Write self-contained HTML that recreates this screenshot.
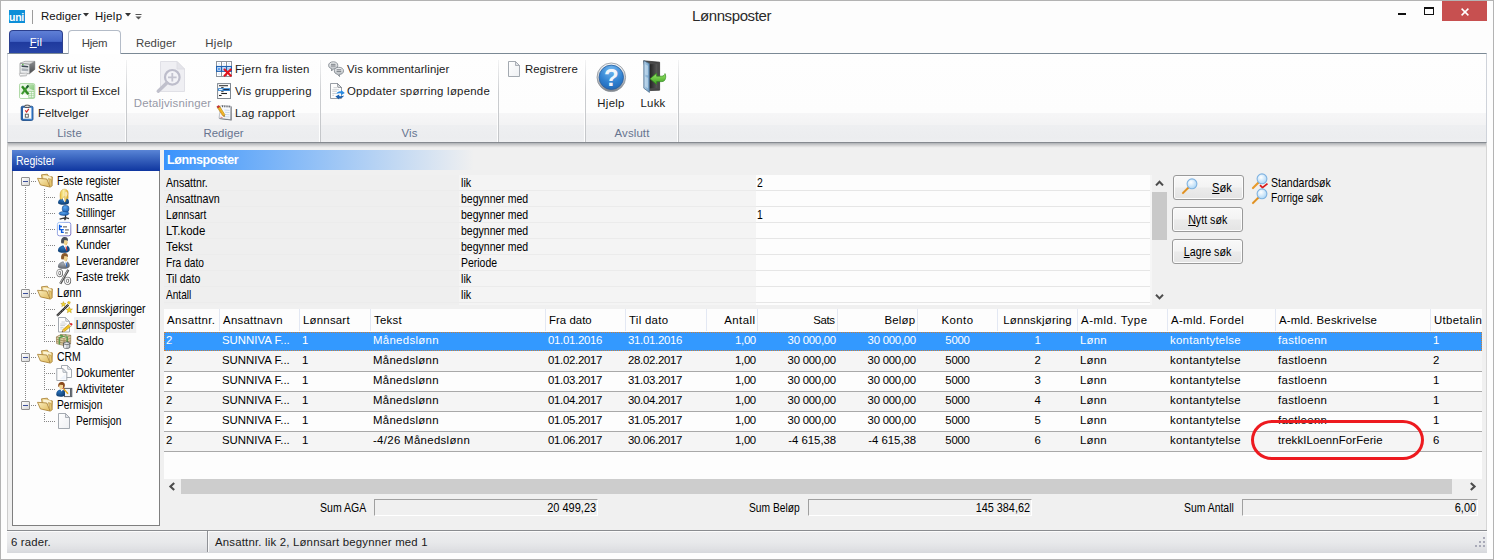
<!DOCTYPE html><html lang="no"><head><meta charset="utf-8"><title>Lønnsposter</title><style>
*{box-sizing:border-box;margin:0;padding:0}
html,body{width:1494px;height:560px;overflow:hidden;background:#fff}
body{position:relative;font-family:"Liberation Sans",Arial,sans-serif;font-size:12px;color:#000}
.a{position:absolute;white-space:nowrap}
.s,.num{font-size:11.4px}
.m{font-size:12.4px;transform-origin:0 50%}
.ib{display:inline-block}
#frame{left:0;top:0;width:1494px;height:560px;border:1px solid #b3b3b3;background:#fdfdfd}
#title{left:0;width:1463px;top:6px;text-align:center;font-size:15px;letter-spacing:-0.4px;color:#2a2a2a;line-height:20px}
.qat{top:8px;line-height:16px;color:#111}
.tab{top:35px;line-height:16px;color:#444;text-align:center}
#fil{left:9px;top:30px;width:54px;height:24px;border-radius:4px 4px 0 0;border:1px solid #2b3f8e;border-bottom:none;
  background:linear-gradient(#5f7fd6 0,#4565c6 45%,#1f3a9e 50%,#2a46a8 100%);color:#fff;text-align:center;line-height:23px}
#hjem{left:68px;top:30px;width:53px;height:24px;border-radius:4px 4px 0 0;border:1px solid #b4bcc8;border-bottom:none;background:#fff;z-index:3}
#ribbon{left:7px;top:53px;width:1480px;height:90px;border:1px solid #cfd3da;border-top:1px solid #7b8995;border-bottom:1px solid #868a90;
  background:linear-gradient(#fefefe 0,#fdfdfd 58.5px,#f6f6f7 59px,#f3f3f4 70.5px,#eeeff1 71.5px,#ecedef 84px,#eff0f2 88px);box-shadow:none}
.gsep{top:60px;width:1px;height:82px;background:linear-gradient(rgba(200,202,206,0.2),#cbcdd0 40%,#c4c6c9)}
.gsep2{top:60px;width:1px;height:82px;background:rgba(255,255,255,0.9)}
.glabel{top:125px;line-height:16px;color:#67748f;text-align:center}
.rb{line-height:16px;color:#1a1a1a}
#body{left:8px;top:143px;width:1478px;height:388px;background:#f0f0f0}
#reghead{left:12px;top:150px;width:148px;height:21px;background:linear-gradient(#5a85d6 0,#4571c8 25%,#2c55b4 60%,#0f36a0 100%);color:#fff;line-height:23px;padding-left:4px}
#tree{left:12px;top:171px;width:148px;height:355px;background:#fdfdfd;border:1px solid #7f7f7f;border-top:none}
.tl{line-height:16px;color:#000}
.dotv{width:1px;background-image:linear-gradient(#868686 50%,transparent 50%);background-size:1px 2px}
.doth{height:1px;background-image:linear-gradient(90deg,#868686 50%,transparent 50%);background-size:2px 1px}
.exp{width:9px;height:9px;border:1px solid #919191;background:linear-gradient(135deg,#fff,#d8d8d8);border-radius:1px}
.exp:after{content:"";position:absolute;left:1px;top:3px;width:5px;height:1px;background:#3a4e9a}
#lphead{left:164px;top:150px;width:310px;height:20px;background:linear-gradient(90deg,#3993fc 0,#f0f0f0 100%);color:#fff;font-weight:bold;font-size:12.5px;line-height:20px;padding-left:3px;letter-spacing:-0.4px}
.sf{line-height:16px}
.btn{height:25px;border:1px solid #999;border-radius:3px;background:linear-gradient(#f9f9f9 0,#f3f3f3 48%,#ebebeb 52%,#e4e4e4 100%);box-shadow:inset 0 0 0 1px #fcfcfc;text-align:center;line-height:25px}
.gh{top:309px;height:23px;line-height:22px;color:#000}
.gc{line-height:19px;height:19px}
.sum{top:499px;height:17px;border:1px solid;border-color:#a0a0a0 #fff #fff #a0a0a0;background:#f0f0f0;text-align:right;line-height:17px;padding-right:1px}
#status{left:7px;top:530px;width:1480px;height:23px;border-top:1px solid #8a8c90;background:linear-gradient(#fbfbfb 0,#fbfbfb 1px,#ededef 1px,#e8e9eb 50%,#e0e1e4 80%,#d6d8dc 100%);}
</style></head><body>
<div id="frame" class="a"></div>
<div id="title" class="a">Lønnsposter</div>
<div class="a" style="left:1398px;top:13px;width:8px;height:2px;background:#111"></div>
<div class="a" style="left:1424px;top:7px;width:10px;height:8px;border:1px solid #111;border-top-width:2px"></div>
<div class="a" style="left:1442px;top:1px;width:45px;height:20px;background:#c75050"></div>
<svg class="a" style="left:1461px;top:8px" width="8" height="8" viewBox="0 0 8 8"><path d="M0.6 0.6 L7.4 7.4 M7.4 0.6 L0.6 7.4" stroke="#fff" stroke-width="1.5" fill="none"/></svg>
<div class="a" style="left:9px;top:10px;width:16px;height:13px;background:#0d8fd8;color:#fff;font-weight:bold;font-size:10.5px;line-height:14px;text-align:center;letter-spacing:-0.3px;text-indent:-1px">uni</div>
<div class="a" style="left:32px;top:10px;width:1px;height:14px;background:#9c9c9c"></div>
<div class="a qat s" style="left:41px;letter-spacing:0.05px">Rediger</div>
<svg class="a" style="left:83px;top:13px" width="6" height="4"><path d="M0 0H6L3 3.5Z" fill="#333"/></svg>
<div class="a qat s" style="left:95px;letter-spacing:0.26px">Hjelp</div>
<svg class="a" style="left:125px;top:13px" width="6" height="4"><path d="M0 0H6L3 3.5Z" fill="#333"/></svg>
<svg class="a" style="left:135px;top:14px" width="7" height="6"><path d="M0.5 0.5H6.5" stroke="#555" stroke-width="1"/><path d="M0.5 2.5H6.5L3.5 5.5Z" fill="#555"/></svg>
<div id="fil" class="a s" style="letter-spacing:0.2px"><span style="text-decoration:underline">F</span>il</div>
<div id="hjem" class="a"></div>
<div class="a tab s" style="left:68px;width:53px;z-index:4;letter-spacing:-0.33px">Hjem</div>
<div class="a tab s" style="left:126px;width:60px;letter-spacing:0.05px">Rediger</div>
<div class="a tab s" style="left:194px;width:50px;letter-spacing:0.26px">Hjelp</div>
<div id="ribbon" class="a"></div>
<div class="a gsep" style="left:126px"></div><div class="a gsep2" style="left:125px"></div>
<div class="a gsep" style="left:320px"></div><div class="a gsep2" style="left:319px"></div>
<div class="a gsep" style="left:498px"></div><div class="a gsep2" style="left:497px"></div>
<div class="a gsep" style="left:585px"></div><div class="a gsep2" style="left:584px"></div>
<div class="a gsep" style="left:678px"></div><div class="a gsep2" style="left:677px"></div>
<div class="a glabel s" style="left:12px;width:115px;letter-spacing:0.13px">Liste</div>
<div class="a glabel s" style="left:127px;width:193px;letter-spacing:0.05px">Rediger</div>
<div class="a glabel s" style="left:321px;width:177px;letter-spacing:0.14px">Vis</div>
<div class="a glabel s" style="left:586px;width:92px;letter-spacing:0.13px">Avslutt</div>
<!--ICONS_SMALL-->
<div class="a" style="left:19px;top:61px;width:16px;height:16px"><svg width="16" height="16" viewBox="0 0 16 16" style="display:block;overflow:visible">
<defs><linearGradient id="pr1" x1="0" y1="0" x2="1" y2="1"><stop offset="0" stop-color="#fafafa"/><stop offset="1" stop-color="#c4c6c8"/></linearGradient>
<linearGradient id="pr2" x1="0" y1="0" x2="0" y2="1"><stop offset="0" stop-color="#8a8c8e"/><stop offset="1" stop-color="#4a4c4e"/></linearGradient></defs>
<path d="M10.4 3.4 L15.8 0.4 V8.4 L10.4 12.8 Z" fill="url(#pr2)" stroke="#555" stroke-width="0.5"/>
<path d="M1 2.3 L6 0.3 L15.8 0.3 L10.4 3.4 Z" fill="url(#pr1)" stroke="#8a8a8a" stroke-width="0.6"/>
<path d="M1 2.3 L10.4 3.4 V12.8 L1 12.2 Z" fill="#eceeef" stroke="#8a8c8e" stroke-width="0.7"/>
<path d="M2.6 4.3 L9.2 5 V6.6 L2.6 6 Z" fill="#3f4a55"/>
<path d="M2.6 7.2 L9.2 7.8 V10.2 L2.6 9.8 Z" fill="#a9afb6"/>
<rect x="3" y="3.1" width="1.6" height="0.9" fill="#4ab838"/>
<path d="M0.3 12.6 L8.2 12.1 L7.4 14.8 L1.2 15.3 Z" fill="#ffffff" stroke="#9a9c9e" stroke-width="0.6"/>
<path d="M1.5 14.4 L7.2 14" stroke="#b5b7b9" stroke-width="0.8"/>
</svg></div>
<div class="a rb s" style="left:38px;top:61px;letter-spacing:0.10px">Skriv ut liste</div>
<div class="a" style="left:19px;top:83px;width:16px;height:16px"><svg width="16" height="16" viewBox="0 0 16 16" style="display:block;overflow:visible">
<defs><linearGradient id="ex1" x1="0" y1="0" x2="1" y2="1"><stop offset="0" stop-color="#f1f9ee"/><stop offset="1" stop-color="#cfe9c8"/></linearGradient>
<linearGradient id="ex2" x1="0" y1="0" x2="1" y2="1"><stop offset="0" stop-color="#bfe3b6"/><stop offset="1" stop-color="#86c97a"/></linearGradient></defs>
<rect x="0.5" y="0.5" width="15.3" height="15" rx="1.6" fill="url(#ex1)" stroke="#a9d6a0" stroke-width="0.9"/>
<path d="M8.5 1.2 H14 Q15.2 1.2 15.2 2.4 V7.5 Q11.5 7 8.5 4 Z" fill="url(#ex2)"/>
<path d="M1 11.5 Q6 10 10 12.5 V15 H2 Q1 15 1 14 Z" fill="#ffffff" opacity="0.85"/>
<rect x="9.8" y="8.6" width="5.2" height="6.2" fill="#f6fbf4" stroke="#8cc982" stroke-width="0.6"/>
<path d="M9.8 10.7 H15 M9.8 12.7 H15 M12.4 8.6 V14.8" stroke="#8cc982" stroke-width="0.6"/>
<path d="M3 3.2 L9.3 11.2" stroke="#2f8a22" stroke-width="2.4"/>
<path d="M9.2 2.6 L2.8 11.2" stroke="#3f9a30" stroke-width="2"/>
<path d="M9.4 2.4 L7.6 4.8" stroke="#1f4f3a" stroke-width="1.6"/>
</svg></div>
<div class="a rb s" style="left:38px;top:83px;letter-spacing:0.04px">Eksport til Excel</div>
<div class="a" style="left:19px;top:105px;width:16px;height:16px"><svg width="16" height="16" viewBox="0 0 16 16" style="display:block;overflow:visible">
<defs><linearGradient id="cl1" x1="0" y1="0" x2="1" y2="0"><stop offset="0" stop-color="#1f5aa8"/><stop offset="1" stop-color="#3b84d6"/></linearGradient></defs>
<rect x="2.2" y="1.2" width="11.8" height="14.3" rx="1.4" fill="url(#cl1)" stroke="#174784" stroke-width="0.8"/>
<rect x="4" y="2.8" width="8.4" height="10.8" fill="#fbfbfb"/>
<path d="M4 13.6 H12.4" stroke="#d8dce2" stroke-width="0.8"/>
<ellipse cx="8.2" cy="1.3" rx="2.9" ry="1.2" fill="#e8e8e8" stroke="#3c3c3c" stroke-width="0.9"/>
<path d="M6.2 5.4 L7.6 7 L9.8 3.8" stroke="#d32424" stroke-width="1.2" fill="none"/>
<rect x="6.3" y="9.2" width="3" height="3" fill="#fff" stroke="#555" stroke-width="0.9"/>
</svg></div>
<div class="a rb s" style="left:38px;top:105px;letter-spacing:0.08px">Feltvelger</div>
<div class="a" style="left:216px;top:61px;width:16px;height:16px"><svg width="16" height="16" viewBox="0 0 16 16" style="display:block;overflow:visible">
<rect x="0.5" y="0.5" width="15" height="15" fill="#ffffff" stroke="#8d949d" stroke-width="1"/>
<path d="M5.5 0.5 V15.5 M10.5 0.5 V15.5" stroke="#8d949d" stroke-width="1"/>
<rect x="0" y="4.9" width="16" height="6" fill="#1f62b2"/>
<rect x="1.2" y="6" width="3.6" height="3.8" fill="#d5e5fb"/><rect x="6.2" y="6" width="3.6" height="3.8" fill="#d5e5fb"/><rect x="11.2" y="6" width="3.6" height="3.8" fill="#d5e5fb"/>
<rect x="2" y="6.8" width="2" height="2.2" fill="#5c9ff0"/><rect x="7" y="6.8" width="2" height="2.2" fill="#a6c8f4"/><rect x="12" y="6.8" width="2" height="2.2" fill="#a6c8f4"/>
<rect x="2.3" y="2" width="1.5" height="1.5" fill="#d5e5fb"/><rect x="7.3" y="2" width="1.5" height="1.5" fill="#d5e5fb"/><rect x="12.3" y="2" width="1.5" height="1.5" fill="#d5e5fb"/>
<rect x="2.3" y="12.3" width="1.5" height="1.5" fill="#d5e5fb"/>
<path d="M8 8 L15.3 15.3 M15.3 8 L8 15.3" stroke="#e0141e" stroke-width="2.1"/>
</svg></div>
<div class="a rb s" style="left:235px;top:61px;letter-spacing:0.14px">Fjern fra listen</div>
<div class="a" style="left:216px;top:83px;width:16px;height:16px"><svg width="16" height="16" viewBox="0 0 16 16" style="display:block;overflow:visible">
<rect x="1.6" y="0.6" width="12.9" height="14.9" fill="#ffffff" stroke="#7f8790" stroke-width="1"/>
<path d="M3 2.7 H12" stroke="#333" stroke-width="1.1"/>
<path d="M5.2 4.5 H7.6 M5.2 8.6 H7.6" stroke="#333" stroke-width="0.9"/>
<rect x="2.1" y="5.2" width="11.9" height="2.7" fill="#2b80d2"/>
<path d="M3 6.55 H6.5" stroke="#e4f0fc" stroke-width="1.1"/>
<path d="M7.5 6.55 H13" stroke="#1a3050" stroke-width="1.1"/>
<path d="M5.2 10.5 H11" stroke="#222" stroke-width="1.1"/>
<path d="M3 12.5 H5.6" stroke="#222" stroke-width="1.1"/>
</svg></div>
<div class="a rb s" style="left:235px;top:83px;letter-spacing:0.25px">Vis gruppering</div>
<div class="a" style="left:216px;top:105px;width:16px;height:16px"><svg width="16" height="16" viewBox="0 0 16 16" style="display:block;overflow:visible">
<path d="M5.2 1 L15.6 1.6 L15.6 15.6 L3.4 14 Z" fill="#5c6068"/>
<path d="M4.8 0.6 L14.8 1.2 L14.6 14.6 L3 13.2 Z" fill="#f7f9fc" stroke="#8a8e96" stroke-width="0.5"/>
<path d="M6.6 0.4 V2.2 M8.8 0.5 V2.3 M11 0.6 V2.4 M13.2 0.7 V2.5" stroke="#3c4048" stroke-width="0.9"/>
<path d="M8.5 5 L13.5 5.4 M8.8 7.2 L13.5 7.6 M8.8 9.4 L13.5 9.8 M8 11.6 L13.5 12" stroke="#c3d3ea" stroke-width="0.9"/>
<path d="M1.6 2.8 L3.8 1.6 L8.8 9.6 L8.3 11.6 L6.5 10.6 Z" fill="#f4c62c" stroke="#b07a14" stroke-width="0.6"/>
<path d="M3 3.5 L7.6 10.8" stroke="#e8902a" stroke-width="0.8"/>
<path d="M0.8 1.6 L3 0.4 L3.9 1.7 L1.7 2.9 Z" fill="#d83030" stroke="#8a1a1a" stroke-width="0.4"/>
<path d="M7.2 10.9 L8.3 11.6 L8.5 10.4 Z" fill="#333"/>
<path d="M4.5 12.2 L6.5 12.5" stroke="#e06060" stroke-width="0.8"/>
</svg></div>
<div class="a rb s" style="left:235px;top:105px;letter-spacing:0.16px">Lag rapport</div>
<div class="a" style="left:328px;top:61px;width:16px;height:16px"><svg width="16" height="16" viewBox="0 0 16 16" style="display:block;overflow:visible">
<defs><linearGradient id="cm1" x1="0" y1="0" x2="0" y2="1"><stop offset="0" stop-color="#f4f5f6"/><stop offset="1" stop-color="#aeb3b9"/></linearGradient></defs>
<path d="M5.2 0.8 C8.2 0.8 9.8 2.3 9.8 4.4 C9.8 6.5 8 8 5.4 8 L3.5 10 L3.6 7.7 C1.7 7.2 0.6 6 0.6 4.4 C0.6 2.3 2.5 0.8 5.2 0.8 Z" fill="url(#cm1)" stroke="#858b92" stroke-width="0.9"/>
<path d="M3 3.3 H7.5 M3 5 H7.5" stroke="#6f757c" stroke-width="0.9"/>
<path d="M10.8 6.3 C13.8 6.3 15.5 7.8 15.5 9.9 C15.5 12 13.8 13.4 11.2 13.4 L11.6 15.6 L9.3 13.2 C7.4 12.8 6.3 11.5 6.3 9.9 C6.3 7.8 8 6.3 10.8 6.3 Z" fill="url(#cm1)" stroke="#858b92" stroke-width="0.9"/>
<path d="M8.6 8.8 H13.2 M8.6 10.6 H13.2" stroke="#6f757c" stroke-width="0.9"/>
</svg></div>
<div class="a rb s" style="left:347px;top:61px;letter-spacing:0.14px">Vis kommentarlinjer</div>
<div class="a" style="left:328px;top:83px;width:16px;height:16px"><svg width="16" height="16" viewBox="0 0 16 16" style="display:block;overflow:visible">
<path d="M2.5 0.5 H9.5 L13.5 4.5 V15.5 H2.5 Z" fill="#fdfdfd" stroke="#8e949c" stroke-width="0.9"/>
<path d="M9.5 0.5 L9.8 4.3 L13.5 4.5 Z" fill="#e6e8ea" stroke="#6e747c" stroke-width="0.7"/>
<path d="M5.5 4.7 H9 M4.3 6.7 H11 M4.3 8.3 H9 M4.3 10.5 H8 M4.3 12.3 H6" stroke="#c1c5ca" stroke-width="0.8"/>
<path d="M8.2 11 C9.2 8.8 11.4 8 13 8.5 L13.1 6.9 L16.8 9.9 L13 12.2 L13 10.6 C11.4 10.1 9.8 10.3 8.2 11 Z" fill="#2b8ae0"/>
<path d="M16 12.4 C15 14.8 12.8 15.5 11.2 15 L11.1 16.6 L7.4 13.6 L11.2 11.4 L11.2 13 C12.8 13.4 14.4 13.2 16 12.4 Z" fill="#1a5fae"/>
</svg></div>
<div class="a rb s" style="left:347px;top:83px;letter-spacing:0.25px">Oppdater spørring løpende</div>
<div class="a" style="left:506px;top:61px;width:16px;height:16px"><svg width="16" height="16" viewBox="0 0 16 16" style="display:block;overflow:visible">
<defs><linearGradient id="dc1" x1="0" y1="0" x2="1" y2="1"><stop offset="0" stop-color="#ffffff"/><stop offset="1" stop-color="#eef0f3"/></linearGradient></defs>
<path d="M2.5 0.5 H9.5 L13.5 4.5 V15.5 H2.5 Z" fill="url(#dc1)" stroke="#9aa0a8" stroke-width="0.9"/>
<path d="M9.5 0.5 V4.5 H13.5 Z" fill="#e1e4e8" stroke="#9aa0a8" stroke-width="0.8"/>
</svg></div>
<div class="a rb s" style="left:525px;top:61px;letter-spacing:0.02px">Registrere</div>
<div class="a" style="left:155px;top:61px;width:32px;height:32px"><svg width="32" height="32" viewBox="0 0 32 32" style="display:block;overflow:visible">
<path d="M5.5 0.5 H22 L29.5 8 V30.5 H5.5 Z" fill="#efeff3" stroke="#e0e0e6" stroke-width="1"/>
<path d="M22 0.5 V8 H29.5 Z" fill="#e4e4ea" stroke="#dcdce2" stroke-width="0.8"/>
<circle cx="17.3" cy="16.3" r="7.3" fill="#f3f3f7" stroke="#bdbdcb" stroke-width="2.2"/>
<path d="M13 16.3 H21.6 M17.3 12 V20.6" stroke="#c4c4d0" stroke-width="1.8"/>
<path d="M12 21.8 L3.2 30.2" stroke="#c0c0cc" stroke-width="3.4" stroke-linecap="round"/>
</svg></div>
<div class="a rb s" style="left:127px;width:90px;text-align:center;top:95px;color:#9698a6;padding-left:1px;letter-spacing:0.18px">Detaljvisninger</div>
<div class="a" style="left:595px;top:61px;width:32px;height:32px"><svg width="32" height="32" viewBox="0 0 32 32" style="display:block;overflow:visible">
<defs>
<radialGradient id="hp1" cx="0.5" cy="0.2" r="0.95"><stop offset="0" stop-color="#74b8f0"/><stop offset="0.55" stop-color="#2f80d0"/><stop offset="1" stop-color="#1b5cab"/></radialGradient>
<linearGradient id="hp2" x1="0" y1="0" x2="0" y2="1"><stop offset="0" stop-color="#fafbfc"/><stop offset="0.5" stop-color="#c9cdd3"/><stop offset="1" stop-color="#7b8189"/></linearGradient>
</defs>
<circle cx="16.3" cy="16.3" r="14.3" fill="url(#hp2)" stroke="#8a9098" stroke-width="0.8"/>
<circle cx="16.3" cy="16.3" r="12.2" fill="url(#hp1)" stroke="#2a5f9e" stroke-width="0.8"/>
<text x="16.3" y="24.8" text-anchor="middle" font-family="Liberation Sans,Arial,sans-serif" font-weight="bold" font-size="24" fill="#f2f6fb">?</text>
</svg></div>
<div class="a rb s" style="left:586px;width:50px;text-align:center;top:95px;letter-spacing:0.26px">Hjelp</div>
<div class="a" style="left:638px;top:61px;width:32px;height:32px"><svg width="32" height="32" viewBox="0 0 32 32" style="display:block;overflow:visible">
<defs><linearGradient id="dr1" x1="0" y1="0" x2="1" y2="0"><stop offset="0" stop-color="#b4d2ea"/><stop offset="1" stop-color="#6c9cc4"/></linearGradient>
<linearGradient id="dr2" x1="0" y1="0" x2="0" y2="1"><stop offset="0" stop-color="#9be868"/><stop offset="1" stop-color="#3a9e20"/></linearGradient>
<linearGradient id="dr3" x1="0" y1="0" x2="1" y2="0"><stop offset="0" stop-color="#1a1a1a"/><stop offset="1" stop-color="#5a5a5a"/></linearGradient></defs>
<path d="M5.6 -0.2 L21.6 1.2 V29.2 L11.4 29.6 Z" fill="#4a4a4a" stroke="#2a2a2a" stroke-width="0.7"/>
<path d="M10.5 3.2 L19.2 3 V26.8 L10.5 27.4 Z" fill="url(#dr3)"/>
<path d="M5.8 -0.3 L11.4 2.6 V31.4 L5.8 27.2 Z" fill="url(#dr1)" stroke="#4f6f8d" stroke-width="0.8"/>
<path d="M7 3.2 L10.1 4.8 V14.5 L7 13.6 Z M7 15.8 L10.1 16.8 V27.6 L7 25.2 Z" fill="#cfe4f4" opacity="0.55"/>
<path d="M12 17.8 L18.6 12.2 V15.2 H23.6 C25.8 15.2 26.8 14 27 12.6 C28.4 15.4 27.8 20.6 24 20.6 H18.6 V23.4 Z" fill="url(#dr2)" stroke="#2f8a1c" stroke-width="0.7"/>
</svg></div>
<div class="a rb s" style="left:628px;width:50px;text-align:center;top:95px;letter-spacing:0.18px">Lukk</div>
<div id="body" class="a"></div>
<div class="a" style="left:7px;top:143px;width:1px;height:388px;background:#cdcdcd"></div>
<div class="a" style="left:1486px;top:143px;width:1px;height:388px;background:#d6d6d6"></div>
<div class="a" style="left:8px;top:143px;width:1478px;height:5px;background:linear-gradient(#adb0b4,#c6c7c9 30%,#dcdcdd 60%,#ebebeb 85%,#f0f0f0)"></div>
<div id="reghead" class="a"><span class="m ib" style="transform:scaleX(0.847)">Register</span></div>
<div id="tree" class="a"></div>
<div class="a dotv" style="left:25px;top:187px;height:219px"></div>
<div class="a doth" style="left:31px;top:181px;width:6px"></div>
<div class="a dotv" style="left:44px;top:189px;height:89px"></div>
<div class="a doth" style="left:31px;top:293px;width:6px"></div>
<div class="a dotv" style="left:44px;top:301px;height:41px"></div>
<div class="a doth" style="left:31px;top:357px;width:6px"></div>
<div class="a dotv" style="left:44px;top:365px;height:25px"></div>
<div class="a doth" style="left:31px;top:405px;width:6px"></div>
<div class="a dotv" style="left:44px;top:413px;height:9px"></div>
<div class="a exp" style="left:21px;top:177px"></div>
<div class="a" style="left:37px;top:173px;width:16px;height:16px"><svg width="16" height="16" viewBox="0 0 16 16" style="display:block;overflow:visible">
<defs><linearGradient id="fd1" x1="0" y1="0" x2="1" y2="1"><stop offset="0" stop-color="#fbefc0"/><stop offset="1" stop-color="#dfb858"/></linearGradient></defs>
<path d="M4.5 1.8 L10.3 1.2 L11.6 3.2 L15.4 3.9 L15 13 L6 12 Z" fill="#ecd28a" stroke="#a67c30" stroke-width="0.8"/>
<path d="M6.2 2.6 L13.8 3.6 L13.6 12 L6.5 11 Z" fill="#fbf3d4"/>
<path d="M0.5 5.3 L9.8 6 L13.2 14.1 L3.4 11.9 Z" fill="url(#fd1)" stroke="#a67c30" stroke-width="0.8"/>
<path d="M13.2 14.1 L15 13 L14.3 6.5 L11.5 5.5 Z" fill="#e6c670" stroke="#b08c3e" stroke-width="0.6"/>
</svg></div>
<div class="a tl m" style="left:57px;top:173px;transform:scaleX(0.835)">Faste register</div>
<div class="a doth" style="left:46px;top:197px;width:10px"></div>
<div class="a" style="left:56px;top:189px;width:16px;height:16px"><svg width="16" height="16" viewBox="0 0 16 16" style="display:block;overflow:visible">
<defs><linearGradient id="wm1" x1="0" y1="0" x2="1" y2="0"><stop offset="0" stop-color="#e9c040"/><stop offset="0.45" stop-color="#faf0a8"/><stop offset="1" stop-color="#d9a420"/></linearGradient>
<radialGradient id="sb1" cx="0.4" cy="0.3" r="0.8"><stop offset="0" stop-color="#2a72bc"/><stop offset="1" stop-color="#0b3564"/></radialGradient></defs>
<path d="M2 13.8 C2 11 4 9.8 6.4 9.5 L8.6 13 L10.2 9.3 C12.2 9.7 13.1 11 13 13.4 C12.9 15.2 10 15.8 7.5 15.8 C4.5 15.8 2 15.3 2 13.8 Z" fill="url(#sb1)"/>
<path d="M6.8 9.2 L8.6 13.6 L10 9.2 Z" fill="#ffffff"/>
<path d="M4.3 10 C3.4 4.2 4.6 0.2 8.3 0.2 C12 0.2 12.6 3.2 12.1 6 L12.2 9.4 L10.4 9.8 L9.2 13 L8.2 7.4 L5.8 10.4 Z" fill="url(#wm1)" stroke="#c4901c" stroke-width="0.4"/>
<path d="M9.2 3 C10.4 2.4 11.4 3 11.5 4.6 C11.6 6.4 10.8 7.8 9.8 8 C9 7 8.8 4.5 9.2 3 Z" fill="#f8e2b4"/>
</svg></div>
<div class="a tl m" style="left:76px;top:189px;transform:scaleX(0.882)">Ansatte</div>
<div class="a doth" style="left:46px;top:213px;width:10px"></div>
<div class="a" style="left:56px;top:205px;width:16px;height:16px"><svg width="16" height="16" viewBox="0 0 16 16" style="display:block;overflow:visible">
<defs><radialGradient id="ch1" cx="0.4" cy="0.3" r="0.8"><stop offset="0" stop-color="#5aa8f0"/><stop offset="1" stop-color="#1b5cae"/></radialGradient></defs>
<path d="M9.5 10 V14.6" stroke="#2a2a2a" stroke-width="1.3"/>
<path d="M3.6 14.2 L9.5 12.6 L13 13.6 M9.5 12.6 L8.6 15.2" stroke="#3a3a3a" stroke-width="1.2" fill="none"/>
<rect x="6.3" y="0.4" width="6.6" height="6.6" rx="2.6" fill="url(#ch1)" stroke="#184a8c" stroke-width="0.6"/>
<ellipse cx="8" cy="8.5" rx="4.9" ry="1.9" fill="url(#ch1)" stroke="#184a8c" stroke-width="0.6"/>
</svg></div>
<div class="a tl m" style="left:76px;top:205px;transform:scaleX(0.829)">Stillinger</div>
<div class="a doth" style="left:46px;top:229px;width:10px"></div>
<div class="a" style="left:56px;top:221px;width:16px;height:16px"><svg width="16" height="16" viewBox="0 0 16 16" style="display:block;overflow:visible">
<defs><linearGradient id="ti1" x1="0" y1="0" x2="1" y2="1"><stop offset="0" stop-color="#9cc4f8"/><stop offset="1" stop-color="#6a5cb8"/></linearGradient></defs>
<rect x="1.4" y="1.4" width="13.4" height="13.4" rx="2" fill="#ffffff" stroke="url(#ti1)" stroke-width="0.9"/>
<path d="M3.6 3.8 V8.6 H7.8 M3.6 5.5 H6 M5.6 8.6 V11.4 H7.8" stroke="#0a5ae0" stroke-width="1.4" fill="none"/>
<rect x="7" y="5" width="4" height="1.6" fill="#909090"/><rect x="9" y="8.1" width="3.9" height="1.6" fill="#909090"/><rect x="9" y="11.1" width="2.8" height="1.5" fill="#909090"/>
</svg></div>
<div class="a tl m" style="left:76px;top:221px;transform:scaleX(0.839)">Lønnsarter</div>
<div class="a doth" style="left:46px;top:245px;width:10px"></div>
<div class="a" style="left:56px;top:237px;width:16px;height:16px"><svg width="16" height="16" viewBox="0 0 16 16" style="display:block;overflow:visible">
<defs><radialGradient id="mb1" cx="0.4" cy="0.3" r="0.8"><stop offset="0" stop-color="#2a72bc"/><stop offset="1" stop-color="#0b3564"/></radialGradient></defs>
<path d="M1.9 13.5 C2 10.6 4.5 9 7.2 8.3 L9.6 11 L11 8.5 C13 9.3 13.9 11 13.7 13 C13.4 15 10.5 15.8 7.5 15.8 C4.5 15.8 1.9 15.2 1.9 13.5 Z" fill="url(#mb1)"/>
<path d="M7.6 8.2 L10.2 13.2 L11.2 8.6 L9.8 8 Z" fill="#ffffff"/>
<path d="M9.5 9.4 L10.6 9.5 L11.3 13.2 L10.4 14.2 Z" fill="#d42a2a"/>
<path d="M7.6 3 L11.3 3.2 C11.8 5.5 11.3 7.8 9.8 8.5 C8.3 8.2 7.4 6.4 7.6 3 Z" fill="#f3d58e"/>
<path d="M9.8 8.5 C10.8 8 11.5 6.5 11.4 4.5 L10.6 6.5 Z" fill="#d8a860"/>
<path d="M5.3 6.2 C4.5 2.6 6 0.1 8.7 0.1 C11.2 0.1 12.4 1.7 11.9 4.2 L11.2 3.4 L8.4 3 L7.7 6.6 Z" fill="#4b4f57"/>
</svg></div>
<div class="a tl m" style="left:76px;top:237px;transform:scaleX(0.858)">Kunder</div>
<div class="a doth" style="left:46px;top:261px;width:10px"></div>
<div class="a" style="left:56px;top:253px;width:16px;height:16px"><svg width="16" height="16" viewBox="0 0 16 16" style="display:block;overflow:visible">
<defs><radialGradient id="mb2" cx="0.4" cy="0.3" r="0.8"><stop offset="0" stop-color="#a4aab2"/><stop offset="1" stop-color="#555a62"/></radialGradient></defs>
<path d="M1.9 13.5 C2 10.6 4.5 9 7.2 8.3 L9.6 11 L11 8.5 C13 9.3 13.9 11 13.7 13 C13.4 15 10.5 15.8 7.5 15.8 C4.5 15.8 1.9 15.2 1.9 13.5 Z" fill="url(#mb2)"/>
<path d="M7.6 8.2 L10.2 13.2 L11.2 8.6 L9.8 8 Z" fill="#ffffff"/>
<path d="M9.5 9.4 L10.6 9.5 L11.3 13.2 L10.4 14.2 Z" fill="#2a6ac8"/>
<path d="M7.6 3 L11.3 3.2 C11.8 5.5 11.3 7.8 9.8 8.5 C8.3 8.2 7.4 6.4 7.6 3 Z" fill="#f3d58e"/>
<path d="M9.8 8.5 C10.8 8 11.5 6.5 11.4 4.5 L10.6 6.5 Z" fill="#d8a860"/>
<path d="M5.3 6.2 C4.5 2.6 6 0.1 8.7 0.1 C11.2 0.1 12.4 1.7 11.9 4.2 L11.2 3.4 L8.4 3 L7.7 6.6 Z" fill="#8a5a2c"/>
</svg></div>
<div class="a tl m" style="left:76px;top:253px;transform:scaleX(0.852)">Leverandører</div>
<div class="a doth" style="left:46px;top:277px;width:10px"></div>
<div class="a" style="left:56px;top:269px;width:16px;height:16px"><svg width="16" height="16" viewBox="0 0 16 16" style="display:block;overflow:visible">
<defs><linearGradient id="pc1" x1="0" y1="0" x2="1" y2="1"><stop offset="0" stop-color="#8a8a8a"/><stop offset="1" stop-color="#3a3a3a"/></linearGradient></defs>
<g fill="none" stroke="url(#pc1)" stroke-width="2.7"><ellipse cx="3.7" cy="4.1" rx="2" ry="2.7"/><ellipse cx="11.6" cy="11.8" rx="2.2" ry="2.7"/></g>
<path d="M12.3 0.9 L4.3 14.7" stroke="#4a4a4a" stroke-width="2.3"/>
<g fill="none" stroke="#f4f4f4" stroke-width="1.35"><ellipse cx="3.7" cy="4.1" rx="2" ry="2.7"/><ellipse cx="11.6" cy="11.8" rx="2.2" ry="2.7"/></g>
<path d="M11.7 1.4 L4 14.4" stroke="#c8c8c8" stroke-width="0.9"/>
</svg></div>
<div class="a tl m" style="left:76px;top:269px;transform:scaleX(0.869)">Faste trekk</div>
<div class="a exp" style="left:21px;top:289px"></div>
<div class="a" style="left:37px;top:285px;width:16px;height:16px"><svg width="16" height="16" viewBox="0 0 16 16" style="display:block;overflow:visible">
<defs><linearGradient id="fd1" x1="0" y1="0" x2="1" y2="1"><stop offset="0" stop-color="#fbefc0"/><stop offset="1" stop-color="#dfb858"/></linearGradient></defs>
<path d="M4.5 1.8 L10.3 1.2 L11.6 3.2 L15.4 3.9 L15 13 L6 12 Z" fill="#ecd28a" stroke="#a67c30" stroke-width="0.8"/>
<path d="M6.2 2.6 L13.8 3.6 L13.6 12 L6.5 11 Z" fill="#fbf3d4"/>
<path d="M0.5 5.3 L9.8 6 L13.2 14.1 L3.4 11.9 Z" fill="url(#fd1)" stroke="#a67c30" stroke-width="0.8"/>
<path d="M13.2 14.1 L15 13 L14.3 6.5 L11.5 5.5 Z" fill="#e6c670" stroke="#b08c3e" stroke-width="0.6"/>
</svg></div>
<div class="a tl m" style="left:57px;top:285px;transform:scaleX(0.863)">Lønn</div>
<div class="a doth" style="left:46px;top:309px;width:10px"></div>
<div class="a" style="left:56px;top:301px;width:16px;height:16px"><svg width="16" height="16" viewBox="0 0 16 16" style="display:block;overflow:visible">
<path d="M1 14.7 L12.3 3.7" stroke="#1a1a1a" stroke-width="2.2"/>
<path d="M1 14.7 L12.3 3.7" stroke="#ffffff" stroke-width="0.9" stroke-dasharray="0.7 0.9"/>
<path d="M7.4 0.6 L8.1 2.4 L10 2.5 L8.5 3.7 L9 5.6 L7.4 4.5 L5.8 5.6 L6.3 3.7 L4.8 2.5 L6.7 2.4 Z" fill="#f4dc28" stroke="#b8901c" stroke-width="0.5"/>
<path d="M12.9 0 L13.4 1.1 L14.6 1.2 L13.7 2 L14 3.2 L12.9 2.5 L11.8 3.2 L12.1 2 L11.2 1.2 L12.4 1.1 Z" fill="#f4dc28" stroke="#b8901c" stroke-width="0.4"/>
<path d="M13.3 5.8 L14.2 8 L16.4 8.1 L14.7 9.5 L15.3 11.8 L13.3 10.5 L11.3 11.8 L11.9 9.5 L10.2 8.1 L12.4 8 Z" fill="#f4dc28" stroke="#b8901c" stroke-width="0.5"/>
</svg></div>
<div class="a tl m" style="left:76px;top:301px;transform:scaleX(0.842)">Lønnskjøringer</div>
<div class="a doth" style="left:46px;top:325px;width:10px"></div>
<div class="a" style="left:56px;top:317px;width:16px;height:16px"><svg width="16" height="16" viewBox="0 0 16 16" style="display:block;overflow:visible">
<path d="M2.5 0.5 H9.5 L13.5 4.5 V15 H2.5 Z" fill="#fdfdfd" stroke="#9aa0a8" stroke-width="0.9"/>
<path d="M9.5 0.5 L9.8 4.3 L13.5 4.5 Z" fill="#e6e9ed" stroke="#9aa0a8" stroke-width="0.7"/>
<path d="M5.5 5 H9 M4.3 7 H10.5 M4.3 8.6 H9 M4.3 10.4 H7.5 M4.3 12 H6.5" stroke="#bfc4ca" stroke-width="0.8"/>
<path d="M13.2 7.2 L15.2 9 L8.8 14.2 L6.1 15 L7 12.4 Z" fill="#f6d024" stroke="#a8780c" stroke-width="0.6"/>
<path d="M8 12.6 L14 8" stroke="#e8a820" stroke-width="0.8"/>
<path d="M13.2 7.2 L14.6 6 C15.6 5.6 16.8 6.8 16.4 7.8 L15.2 9 Z" fill="#d82828"/>
<path d="M12.6 7.7 L13.6 6.9 L15.6 8.7 L14.7 9.5 Z" fill="#e0e4e8"/>
<path d="M7 12.4 L8.8 14.2 L6.1 15 Z" fill="#e8b888"/><path d="M6.5 13.9 L7.2 14.7 L6.1 15 Z" fill="#222"/>
</svg></div>
<div class="a tl m" style="left:76px;top:317px;background:#f0f0f0;padding:0 2px;margin-left:-2px;transform:scaleX(0.852)">Lønnsposter</div>
<div class="a doth" style="left:46px;top:341px;width:10px"></div>
<div class="a" style="left:56px;top:333px;width:16px;height:16px"><svg width="16" height="16" viewBox="0 0 16 16" style="display:block;overflow:visible">
<path d="M0.4 4 L5 1.6 L14.8 2.4 L14.6 10.8 L8 12.6 L0.6 10.6 Z" fill="#d9c9a2" stroke="#8a6e3c" stroke-width="0.6"/>
<path d="M0.4 4 L8 5.6 L14.8 2.4 L5 1.6 Z" fill="#efe6d2" stroke="#8a6e3c" stroke-width="0.5"/>
<path d="M0.5 6.3 L8 8 L14.7 5.2 M0.5 8.5 L8 10.3 L14.7 7.8 M8 5.6 V12.6" stroke="#8a6e3c" stroke-width="0.6" fill="none"/>
<path d="M4 2.2 L11.2 4 V11.6 M10.4 2 L3.4 4.8 V11.4" stroke="#5f9a4c" stroke-width="1.5" fill="none"/>
<path d="M7 2.2 L10 3.2" stroke="#e8b0a8" stroke-width="1"/>
<path d="M7.6 10.2 V14.2 C7.6 15.8 13.8 15.8 13.8 14.2 V10.2 Z" fill="#c9cdd2" stroke="#34383e" stroke-width="0.7"/>
<path d="M9 11.6 V15" stroke="#ffffff" stroke-width="1.3"/>
<ellipse cx="10.7" cy="10.2" rx="3.1" ry="1.2" fill="#f4f6f8" stroke="#34383e" stroke-width="0.7"/>
</svg></div>
<div class="a tl m" style="left:76px;top:333px;transform:scaleX(0.873)">Saldo</div>
<div class="a exp" style="left:21px;top:353px"></div>
<div class="a" style="left:37px;top:349px;width:16px;height:16px"><svg width="16" height="16" viewBox="0 0 16 16" style="display:block;overflow:visible">
<defs><linearGradient id="fd1" x1="0" y1="0" x2="1" y2="1"><stop offset="0" stop-color="#fbefc0"/><stop offset="1" stop-color="#dfb858"/></linearGradient></defs>
<path d="M4.5 1.8 L10.3 1.2 L11.6 3.2 L15.4 3.9 L15 13 L6 12 Z" fill="#ecd28a" stroke="#a67c30" stroke-width="0.8"/>
<path d="M6.2 2.6 L13.8 3.6 L13.6 12 L6.5 11 Z" fill="#fbf3d4"/>
<path d="M0.5 5.3 L9.8 6 L13.2 14.1 L3.4 11.9 Z" fill="url(#fd1)" stroke="#a67c30" stroke-width="0.8"/>
<path d="M13.2 14.1 L15 13 L14.3 6.5 L11.5 5.5 Z" fill="#e6c670" stroke="#b08c3e" stroke-width="0.6"/>
</svg></div>
<div class="a tl m" style="left:57px;top:349px;transform:scaleX(0.843)">CRM</div>
<div class="a doth" style="left:46px;top:373px;width:10px"></div>
<div class="a" style="left:56px;top:365px;width:16px;height:16px"><svg width="16" height="16" viewBox="0 0 16 16" style="display:block;overflow:visible">
<path d="M5.5 0.5 H11.5 L15.5 4.5 V12.5 H5.5 Z" fill="#fdfdfd" stroke="#9aa0a8" stroke-width="0.9"/>
<path d="M11.5 0.5 L11.7 4.3 L15.5 4.5 Z" fill="#e4e8ee" stroke="#9aa0a8" stroke-width="0.7"/>
<path d="M0.8 3.5 H6.8 L10.8 7.5 V15.5 H0.8 Z" fill="#fdfdfd" stroke="#9aa0a8" stroke-width="0.9"/>
<path d="M6.8 3.5 L7 7.3 L10.8 7.5 Z" fill="#e4e8ee" stroke="#9aa0a8" stroke-width="0.7"/>
<path d="M4 14 L9.5 9 V14.5 Z" fill="#e8f0fa" opacity="0.7"/>
</svg></div>
<div class="a tl m" style="left:76px;top:365px;transform:scaleX(0.869)">Dokumenter</div>
<div class="a doth" style="left:46px;top:389px;width:10px"></div>
<div class="a" style="left:56px;top:381px;width:16px;height:16px"><svg width="16" height="16" viewBox="0 0 16 16" style="display:block;overflow:visible">
<rect x="8.4" y="7.4" width="7.4" height="8.2" fill="#eef2f8" stroke="#5a6068" stroke-width="1"/>
<path d="M14.8 7.4 V15.6" stroke="#5a6068" stroke-width="1.6"/>
<path d="M0.2 13.6 C0.2 10.8 2 9 4.4 8.6 L5.6 10.6 L7 8.8 C8.6 9.4 9.2 11 9 13.4 C8.8 15.2 6.5 15.8 4.6 15.8 C2.2 15.8 0.2 15.2 0.2 13.6 Z" fill="url(#sb1)"/>
<path d="M3 3.6 L6.8 3.4 C7.2 5.6 6.8 8 5.4 8.8 C3.8 8.4 2.8 6.6 3 3.6 Z" fill="#f3d58e"/>
<path d="M2.2 5.4 C1.8 2.4 3.4 0.9 5.6 0.9 C8 0.9 9.6 2.6 8.6 5.8 C8.2 7 7.6 7.4 7.2 7.4 L7 4 L3.6 3.8 L3 6 Z" fill="#8a4a1c"/>
<path d="M6.4 7.4 L8 7" stroke="#c03020" stroke-width="1"/>
<path d="M7.4 7.6 L12 12.8" stroke="#e8a818" stroke-width="1.4"/>
</svg></div>
<div class="a tl m" style="left:76px;top:381px;transform:scaleX(0.885)">Aktiviteter</div>
<div class="a exp" style="left:21px;top:401px"></div>
<div class="a" style="left:37px;top:397px;width:16px;height:16px"><svg width="16" height="16" viewBox="0 0 16 16" style="display:block;overflow:visible">
<defs><linearGradient id="fd1" x1="0" y1="0" x2="1" y2="1"><stop offset="0" stop-color="#fbefc0"/><stop offset="1" stop-color="#dfb858"/></linearGradient></defs>
<path d="M4.5 1.8 L10.3 1.2 L11.6 3.2 L15.4 3.9 L15 13 L6 12 Z" fill="#ecd28a" stroke="#a67c30" stroke-width="0.8"/>
<path d="M6.2 2.6 L13.8 3.6 L13.6 12 L6.5 11 Z" fill="#fbf3d4"/>
<path d="M0.5 5.3 L9.8 6 L13.2 14.1 L3.4 11.9 Z" fill="url(#fd1)" stroke="#a67c30" stroke-width="0.8"/>
<path d="M13.2 14.1 L15 13 L14.3 6.5 L11.5 5.5 Z" fill="#e6c670" stroke="#b08c3e" stroke-width="0.6"/>
</svg></div>
<div class="a tl m" style="left:57px;top:397px;transform:scaleX(0.824)">Permisjon</div>
<div class="a doth" style="left:46px;top:421px;width:10px"></div>
<div class="a" style="left:56px;top:413px;width:16px;height:16px"><svg width="16" height="16" viewBox="0 0 16 16" style="display:block;overflow:visible">
<defs><linearGradient id="dc1" x1="0" y1="0" x2="1" y2="1"><stop offset="0" stop-color="#ffffff"/><stop offset="1" stop-color="#eef0f3"/></linearGradient></defs>
<path d="M2.5 0.5 H9.5 L13.5 4.5 V15.5 H2.5 Z" fill="url(#dc1)" stroke="#9aa0a8" stroke-width="0.9"/>
<path d="M9.5 0.5 V4.5 H13.5 Z" fill="#e1e4e8" stroke="#9aa0a8" stroke-width="0.8"/>
</svg></div>
<div class="a tl m" style="left:76px;top:413px;transform:scaleX(0.824)">Permisjon</div>
<div id="lphead" class="a">Lønnsposter</div>
<div class="a" style="left:164px;top:175px;width:295px;height:130px;background:#efefef"></div>
<div class="a" style="left:459px;top:175px;width:297px;height:130px;background:#f4f4f4"></div>
<div class="a" style="left:756px;top:175px;width:394px;height:130px;background:#fdfdfd"></div>
<div class="a" style="left:1150px;top:175px;width:2px;height:130px;background:#f6f6f6"></div>
<div class="a" style="left:164px;top:190px;width:295px;height:1px;background:#ececec"></div>
<div class="a" style="left:459px;top:190px;width:297px;height:1px;background:#ebebeb"></div>
<div class="a" style="left:756px;top:190px;width:394px;height:1px;background:#e6e6e6"></div>
<div class="a" style="left:164px;top:206px;width:295px;height:1px;background:#ececec"></div>
<div class="a" style="left:459px;top:206px;width:297px;height:1px;background:#ebebeb"></div>
<div class="a" style="left:756px;top:206px;width:394px;height:1px;background:#e6e6e6"></div>
<div class="a" style="left:164px;top:222px;width:295px;height:1px;background:#ececec"></div>
<div class="a" style="left:459px;top:222px;width:297px;height:1px;background:#ebebeb"></div>
<div class="a" style="left:756px;top:222px;width:394px;height:1px;background:#e6e6e6"></div>
<div class="a" style="left:164px;top:238px;width:295px;height:1px;background:#ececec"></div>
<div class="a" style="left:459px;top:238px;width:297px;height:1px;background:#ebebeb"></div>
<div class="a" style="left:756px;top:238px;width:394px;height:1px;background:#e6e6e6"></div>
<div class="a" style="left:164px;top:254px;width:295px;height:1px;background:#ececec"></div>
<div class="a" style="left:459px;top:254px;width:297px;height:1px;background:#ebebeb"></div>
<div class="a" style="left:756px;top:254px;width:394px;height:1px;background:#e6e6e6"></div>
<div class="a" style="left:164px;top:270px;width:295px;height:1px;background:#ececec"></div>
<div class="a" style="left:459px;top:270px;width:297px;height:1px;background:#ebebeb"></div>
<div class="a" style="left:756px;top:270px;width:394px;height:1px;background:#e6e6e6"></div>
<div class="a" style="left:164px;top:286px;width:295px;height:1px;background:#ececec"></div>
<div class="a" style="left:459px;top:286px;width:297px;height:1px;background:#ebebeb"></div>
<div class="a" style="left:756px;top:286px;width:394px;height:1px;background:#e6e6e6"></div>
<div class="a" style="left:164px;top:302px;width:295px;height:1px;background:#ececec"></div>
<div class="a" style="left:459px;top:302px;width:297px;height:1px;background:#ebebeb"></div>
<div class="a" style="left:756px;top:302px;width:394px;height:1px;background:#e6e6e6"></div>
<div class="a sf m" style="left:166px;top:175px;transform:scaleX(0.854)">Ansattnr.</div>
<div class="a sf m" style="left:461px;top:175px;transform:scaleX(0.871)">lik</div>
<div class="a sf m" style="left:757px;top:175px;transform:scaleX(0.840)">2</div>
<div class="a sf m" style="left:166px;top:191px;transform:scaleX(0.867)">Ansattnavn</div>
<div class="a sf m" style="left:461px;top:191px;transform:scaleX(0.848)">begynner med</div>
<div class="a sf m" style="left:166px;top:207px;transform:scaleX(0.824)">Lønnsart</div>
<div class="a sf m" style="left:461px;top:207px;transform:scaleX(0.848)">begynner med</div>
<div class="a sf m" style="left:757px;top:207px;transform:scaleX(0.840)">1</div>
<div class="a sf m" style="left:166px;top:223px;transform:scaleX(0.925)">LT.kode</div>
<div class="a sf m" style="left:461px;top:223px;transform:scaleX(0.848)">begynner med</div>
<div class="a sf m" style="left:166px;top:239px;transform:scaleX(0.909)">Tekst</div>
<div class="a sf m" style="left:461px;top:239px;transform:scaleX(0.848)">begynner med</div>
<div class="a sf m" style="left:166px;top:255px;transform:scaleX(0.823)">Fra dato</div>
<div class="a sf m" style="left:461px;top:255px;transform:scaleX(0.845)">Periode</div>
<div class="a sf m" style="left:166px;top:271px;transform:scaleX(0.853)">Til dato</div>
<div class="a sf m" style="left:461px;top:271px;transform:scaleX(0.871)">lik</div>
<div class="a sf m" style="left:166px;top:287px;transform:scaleX(0.816)">Antall</div>
<div class="a sf m" style="left:461px;top:287px;transform:scaleX(0.871)">lik</div>
<div class="a" style="left:1152px;top:175px;width:16px;height:132px;background:#f0f0f0"></div>
<div class="a" style="left:1152px;top:192px;width:15px;height:48px;background:#c9c9c9"></div>
<svg class="a" style="left:1155px;top:180px" width="9" height="6"><path d="M1 5.4L4.5 1.8L8 5.4" stroke="#4c4c4c" stroke-width="2" fill="none"/></svg>
<svg class="a" style="left:1155px;top:294px" width="9" height="6"><path d="M1 0.8L4.5 4.4L8 0.8" stroke="#4c4c4c" stroke-width="2" fill="none"/></svg>
<div class="a btn" style="left:1173px;top:175px;width:71px;padding-left:28px"><span class="m ib" style="transform:scaleX(0.898);transform-origin:50% 50%"><span style="text-decoration:underline">S</span>øk</span></div>
<div class="a" style="left:1182px;top:178px;width:16px;height:16px"><svg width="16" height="16" viewBox="0 0 16 16" style="display:block;overflow:visible">
<defs><radialGradient id="mg1" cx="0.4" cy="0.35" r="0.7"><stop offset="0" stop-color="#ffffff"/><stop offset="1" stop-color="#a8d4f6"/></radialGradient></defs>
<path d="M6.5 9.5 L1 15" stroke="#e89a2c" stroke-width="2.2" stroke-linecap="round"/>
<path d="M6.5 9.5 L1 15" stroke="#8a5a14" stroke-width="0.5" opacity="0.4"/>
<circle cx="10" cy="5.8" r="4.9" fill="url(#mg1)" stroke="#7fb2e0" stroke-width="1.1"/>
</svg></div>
<div class="a btn" style="left:1172px;top:207px;width:71px"><span class="m ib" style="transform:scaleX(0.862);transform-origin:50% 50%"><span style="text-decoration:underline">N</span>ytt søk</span></div>
<div class="a btn" style="left:1172px;top:239px;width:71px"><span class="m ib" style="transform:scaleX(0.863);transform-origin:50% 50%"><span style="text-decoration:underline">L</span>agre søk</span></div>
<div class="a" style="left:1252px;top:173px;width:16px;height:16px"><svg width="16" height="16" viewBox="0 0 16 16" style="display:block;overflow:visible">
<path d="M6.5 9.5 L1 15" stroke="#e89a2c" stroke-width="2.2" stroke-linecap="round"/>
<circle cx="10" cy="5.8" r="4.9" fill="url(#mg1)" stroke="#7fb2e0" stroke-width="1.1"/>
<path d="M8 12.2 L10.5 14.6 L15.5 10.6" stroke="#d81818" stroke-width="1.8" fill="none"/>
</svg></div>
<div class="a m" style="left:1271px;top:175px;line-height:16px;transform:scaleX(0.852)">Standardsøk</div>
<div class="a" style="left:1252px;top:188px;width:16px;height:16px"><svg width="16" height="16" viewBox="0 0 16 16" style="display:block;overflow:visible">
<defs><radialGradient id="mg1" cx="0.4" cy="0.35" r="0.7"><stop offset="0" stop-color="#ffffff"/><stop offset="1" stop-color="#a8d4f6"/></radialGradient></defs>
<path d="M6.5 9.5 L1 15" stroke="#e89a2c" stroke-width="2.2" stroke-linecap="round"/>
<path d="M6.5 9.5 L1 15" stroke="#8a5a14" stroke-width="0.5" opacity="0.4"/>
<circle cx="10" cy="5.8" r="4.9" fill="url(#mg1)" stroke="#7fb2e0" stroke-width="1.1"/>
</svg></div>
<div class="a m" style="left:1271px;top:190px;line-height:16px;transform:scaleX(0.829)">Forrige søk</div>
<div class="a" style="left:164px;top:309px;width:1318px;height:170px;background:#fdfdfd"></div>
<div class="a" style="left:219px;top:309px;width:1px;height:22px;background:#e3e8f3"></div>
<div class="a" style="left:299px;top:309px;width:1px;height:22px;background:#e3e8f3"></div>
<div class="a" style="left:370px;top:309px;width:1px;height:22px;background:#e3e8f3"></div>
<div class="a" style="left:545px;top:309px;width:1px;height:22px;background:#e3e8f3"></div>
<div class="a" style="left:625px;top:309px;width:1px;height:22px;background:#e3e8f3"></div>
<div class="a" style="left:706px;top:309px;width:1px;height:22px;background:#e3e8f3"></div>
<div class="a" style="left:757px;top:309px;width:1px;height:22px;background:#e3e8f3"></div>
<div class="a" style="left:837px;top:309px;width:1px;height:22px;background:#e3e8f3"></div>
<div class="a" style="left:917px;top:309px;width:1px;height:22px;background:#e3e8f3"></div>
<div class="a" style="left:997px;top:309px;width:1px;height:22px;background:#e3e8f3"></div>
<div class="a" style="left:1077px;top:309px;width:1px;height:22px;background:#e3e8f3"></div>
<div class="a" style="left:1167px;top:309px;width:1px;height:22px;background:#e3e8f3"></div>
<div class="a" style="left:1275px;top:309px;width:1px;height:22px;background:#e3e8f3"></div>
<div class="a" style="left:1430px;top:309px;width:1px;height:22px;background:#e3e8f3"></div>
<div class="a gh s" style="left:167px;letter-spacing:0.38px">Ansattnr.</div>
<div class="a gh s" style="left:223px;letter-spacing:0.28px">Ansattnavn</div>
<div class="a gh s" style="left:303px;letter-spacing:0.23px">Lønnsart</div>
<div class="a gh s" style="left:374px;letter-spacing:0.24px">Tekst</div>
<div class="a gh s" style="left:549px;letter-spacing:0.04px">Fra dato</div>
<div class="a gh s" style="left:629px;letter-spacing:0.29px">Til dato</div>
<div class="a gh s" style="left:706px;width:51px;padding-right:1.54px;text-align:right;letter-spacing:0.46px">Antall</div>
<div class="a gh s" style="left:757px;width:80px;padding-right:2.38px;text-align:right;letter-spacing:-0.38px">Sats</div>
<div class="a gh s" style="left:837px;width:80px;padding-right:1.84px;text-align:right;letter-spacing:0.16px">Beløp</div>
<div class="a gh s" style="left:917px;width:81px;text-align:center;letter-spacing:0.40px">Konto</div>
<div class="a gh s" style="left:997px;width:81px;text-align:center;letter-spacing:0.24px">Lønnskjøring</div>
<div class="a gh s" style="left:1081px;letter-spacing:0.54px">A-mld. Type</div>
<div class="a gh s" style="left:1171px;letter-spacing:0.36px">A-mld. Fordel</div>
<div class="a gh s" style="left:1279px;letter-spacing:0.21px">A-mld. Beskrivelse</div>
<div class="a gh s" style="left:1434px;letter-spacing:0.35px">Utbetalin</div>
<div class="a" style="left:164px;top:332px;width:1318px;height:19px;background:#3399ff;border:1px dotted #c8803c"></div>
<div class="a" style="left:164px;top:351px;width:1318px;height:1px;background:#f5f5f5"></div>
<div class="a gc num" style="left:166px;top:331px;color:#fff;letter-spacing:-0.33px">2</div>
<div class="a gc s" style="left:222px;top:331px;color:#fff;letter-spacing:0.02px">SUNNIVA F...</div>
<div class="a gc num" style="left:302px;top:331px;color:#fff;letter-spacing:-0.33px">1</div>
<div class="a gc s" style="left:373px;top:331px;color:#fff;letter-spacing:0.31px">Månedslønn</div>
<div class="a gc num" style="left:548px;top:331px;color:#fff;letter-spacing:-0.29px">01.01.2016</div>
<div class="a gc num" style="left:628px;top:331px;color:#fff;letter-spacing:-0.29px">31.01.2016</div>
<div class="a gc num" style="left:706px;width:51px;padding-right:1.15px;text-align:right;top:331px;color:#fff;letter-spacing:-0.35px">1,00</div>
<div class="a gc num" style="left:757px;width:80px;padding-right:1.06px;text-align:right;top:331px;color:#fff;letter-spacing:-0.26px">30 000,00</div>
<div class="a gc num" style="left:837px;width:80px;padding-right:1.06px;text-align:right;top:331px;color:#fff;letter-spacing:-0.26px">30 000,00</div>
<div class="a gc num" style="left:917px;width:81px;text-align:center;top:331px;color:#fff;letter-spacing:-0.26px">5000</div>
<div class="a gc num" style="left:997px;width:81px;text-align:center;top:331px;color:#fff;letter-spacing:-0.33px">1</div>
<div class="a gc s" style="left:1080px;top:331px;color:#fff;letter-spacing:0.20px">Lønn</div>
<div class="a gc s" style="left:1170px;top:331px;color:#fff;letter-spacing:0.29px">kontantytelse</div>
<div class="a gc s" style="left:1278px;top:331px;color:#fff;letter-spacing:0.34px">fastloenn</div>
<div class="a gc num" style="left:1433px;top:331px;color:#fff;letter-spacing:-0.33px">1</div>
<div class="a" style="left:164px;top:352px;width:1318px;height:19px;background:#f5f5f5"></div>
<div class="a" style="left:164px;top:371px;width:1318px;height:1px;background:#a9a9a9"></div>
<div class="a gc num" style="left:166px;top:351px;color:#000;letter-spacing:-0.33px">2</div>
<div class="a gc s" style="left:222px;top:351px;color:#000;letter-spacing:0.02px">SUNNIVA F...</div>
<div class="a gc num" style="left:302px;top:351px;color:#000;letter-spacing:-0.33px">1</div>
<div class="a gc s" style="left:373px;top:351px;color:#000;letter-spacing:0.31px">Månedslønn</div>
<div class="a gc num" style="left:548px;top:351px;color:#000;letter-spacing:-0.29px">01.02.2017</div>
<div class="a gc num" style="left:628px;top:351px;color:#000;letter-spacing:-0.29px">28.02.2017</div>
<div class="a gc num" style="left:706px;width:51px;padding-right:1.15px;text-align:right;top:351px;color:#000;letter-spacing:-0.35px">1,00</div>
<div class="a gc num" style="left:757px;width:80px;padding-right:1.06px;text-align:right;top:351px;color:#000;letter-spacing:-0.26px">30 000,00</div>
<div class="a gc num" style="left:837px;width:80px;padding-right:1.06px;text-align:right;top:351px;color:#000;letter-spacing:-0.26px">30 000,00</div>
<div class="a gc num" style="left:917px;width:81px;text-align:center;top:351px;color:#000;letter-spacing:-0.26px">5000</div>
<div class="a gc num" style="left:997px;width:81px;text-align:center;top:351px;color:#000;letter-spacing:-0.33px">2</div>
<div class="a gc s" style="left:1080px;top:351px;color:#000;letter-spacing:0.20px">Lønn</div>
<div class="a gc s" style="left:1170px;top:351px;color:#000;letter-spacing:0.29px">kontantytelse</div>
<div class="a gc s" style="left:1278px;top:351px;color:#000;letter-spacing:0.34px">fastloenn</div>
<div class="a gc num" style="left:1433px;top:351px;color:#000;letter-spacing:-0.33px">2</div>
<div class="a" style="left:164px;top:372px;width:1318px;height:19px;background:#fdfdfd"></div>
<div class="a" style="left:164px;top:391px;width:1318px;height:1px;background:#a9a9a9"></div>
<div class="a gc num" style="left:166px;top:371px;color:#000;letter-spacing:-0.33px">2</div>
<div class="a gc s" style="left:222px;top:371px;color:#000;letter-spacing:0.02px">SUNNIVA F...</div>
<div class="a gc num" style="left:302px;top:371px;color:#000;letter-spacing:-0.33px">1</div>
<div class="a gc s" style="left:373px;top:371px;color:#000;letter-spacing:0.31px">Månedslønn</div>
<div class="a gc num" style="left:548px;top:371px;color:#000;letter-spacing:-0.29px">01.03.2017</div>
<div class="a gc num" style="left:628px;top:371px;color:#000;letter-spacing:-0.29px">31.03.2017</div>
<div class="a gc num" style="left:706px;width:51px;padding-right:1.15px;text-align:right;top:371px;color:#000;letter-spacing:-0.35px">1,00</div>
<div class="a gc num" style="left:757px;width:80px;padding-right:1.06px;text-align:right;top:371px;color:#000;letter-spacing:-0.26px">30 000,00</div>
<div class="a gc num" style="left:837px;width:80px;padding-right:1.06px;text-align:right;top:371px;color:#000;letter-spacing:-0.26px">30 000,00</div>
<div class="a gc num" style="left:917px;width:81px;text-align:center;top:371px;color:#000;letter-spacing:-0.26px">5000</div>
<div class="a gc num" style="left:997px;width:81px;text-align:center;top:371px;color:#000;letter-spacing:-0.33px">3</div>
<div class="a gc s" style="left:1080px;top:371px;color:#000;letter-spacing:0.20px">Lønn</div>
<div class="a gc s" style="left:1170px;top:371px;color:#000;letter-spacing:0.29px">kontantytelse</div>
<div class="a gc s" style="left:1278px;top:371px;color:#000;letter-spacing:0.34px">fastloenn</div>
<div class="a gc num" style="left:1433px;top:371px;color:#000;letter-spacing:-0.33px">1</div>
<div class="a" style="left:164px;top:392px;width:1318px;height:19px;background:#f5f5f5"></div>
<div class="a" style="left:164px;top:411px;width:1318px;height:1px;background:#a9a9a9"></div>
<div class="a gc num" style="left:166px;top:391px;color:#000;letter-spacing:-0.33px">2</div>
<div class="a gc s" style="left:222px;top:391px;color:#000;letter-spacing:0.02px">SUNNIVA F...</div>
<div class="a gc num" style="left:302px;top:391px;color:#000;letter-spacing:-0.33px">1</div>
<div class="a gc s" style="left:373px;top:391px;color:#000;letter-spacing:0.31px">Månedslønn</div>
<div class="a gc num" style="left:548px;top:391px;color:#000;letter-spacing:-0.29px">01.04.2017</div>
<div class="a gc num" style="left:628px;top:391px;color:#000;letter-spacing:-0.29px">30.04.2017</div>
<div class="a gc num" style="left:706px;width:51px;padding-right:1.15px;text-align:right;top:391px;color:#000;letter-spacing:-0.35px">1,00</div>
<div class="a gc num" style="left:757px;width:80px;padding-right:1.06px;text-align:right;top:391px;color:#000;letter-spacing:-0.26px">30 000,00</div>
<div class="a gc num" style="left:837px;width:80px;padding-right:1.06px;text-align:right;top:391px;color:#000;letter-spacing:-0.26px">30 000,00</div>
<div class="a gc num" style="left:917px;width:81px;text-align:center;top:391px;color:#000;letter-spacing:-0.26px">5000</div>
<div class="a gc num" style="left:997px;width:81px;text-align:center;top:391px;color:#000;letter-spacing:-0.33px">4</div>
<div class="a gc s" style="left:1080px;top:391px;color:#000;letter-spacing:0.20px">Lønn</div>
<div class="a gc s" style="left:1170px;top:391px;color:#000;letter-spacing:0.29px">kontantytelse</div>
<div class="a gc s" style="left:1278px;top:391px;color:#000;letter-spacing:0.34px">fastloenn</div>
<div class="a gc num" style="left:1433px;top:391px;color:#000;letter-spacing:-0.33px">1</div>
<div class="a" style="left:164px;top:412px;width:1318px;height:19px;background:#fdfdfd"></div>
<div class="a" style="left:164px;top:431px;width:1318px;height:1px;background:#a9a9a9"></div>
<div class="a gc num" style="left:166px;top:411px;color:#000;letter-spacing:-0.33px">2</div>
<div class="a gc s" style="left:222px;top:411px;color:#000;letter-spacing:0.02px">SUNNIVA F...</div>
<div class="a gc num" style="left:302px;top:411px;color:#000;letter-spacing:-0.33px">1</div>
<div class="a gc s" style="left:373px;top:411px;color:#000;letter-spacing:0.31px">Månedslønn</div>
<div class="a gc num" style="left:548px;top:411px;color:#000;letter-spacing:-0.29px">01.05.2017</div>
<div class="a gc num" style="left:628px;top:411px;color:#000;letter-spacing:-0.29px">31.05.2017</div>
<div class="a gc num" style="left:706px;width:51px;padding-right:1.15px;text-align:right;top:411px;color:#000;letter-spacing:-0.35px">1,00</div>
<div class="a gc num" style="left:757px;width:80px;padding-right:1.06px;text-align:right;top:411px;color:#000;letter-spacing:-0.26px">30 000,00</div>
<div class="a gc num" style="left:837px;width:80px;padding-right:1.06px;text-align:right;top:411px;color:#000;letter-spacing:-0.26px">30 000,00</div>
<div class="a gc num" style="left:917px;width:81px;text-align:center;top:411px;color:#000;letter-spacing:-0.26px">5000</div>
<div class="a gc num" style="left:997px;width:81px;text-align:center;top:411px;color:#000;letter-spacing:-0.33px">5</div>
<div class="a gc s" style="left:1080px;top:411px;color:#000;letter-spacing:0.20px">Lønn</div>
<div class="a gc s" style="left:1170px;top:411px;color:#000;letter-spacing:0.29px">kontantytelse</div>
<div class="a gc s" style="left:1278px;top:411px;color:#000;letter-spacing:0.34px">fastloenn</div>
<div class="a gc num" style="left:1433px;top:411px;color:#000;letter-spacing:-0.33px">1</div>
<div class="a" style="left:164px;top:432px;width:1318px;height:19px;background:#f5f5f5"></div>
<div class="a" style="left:164px;top:451px;width:1318px;height:1px;background:#a9a9a9"></div>
<div class="a gc num" style="left:166px;top:431px;color:#000;letter-spacing:-0.33px">2</div>
<div class="a gc s" style="left:222px;top:431px;color:#000;letter-spacing:0.02px">SUNNIVA F...</div>
<div class="a gc num" style="left:302px;top:431px;color:#000;letter-spacing:-0.33px">1</div>
<div class="a gc s" style="left:373px;top:431px;color:#000;letter-spacing:0.33px">-4/26 Månedslønn</div>
<div class="a gc num" style="left:548px;top:431px;color:#000;letter-spacing:-0.29px">01.06.2017</div>
<div class="a gc num" style="left:628px;top:431px;color:#000;letter-spacing:-0.29px">30.06.2017</div>
<div class="a gc num" style="left:706px;width:51px;padding-right:1.15px;text-align:right;top:431px;color:#000;letter-spacing:-0.35px">1,00</div>
<div class="a gc num" style="left:757px;width:80px;padding-right:0.82px;text-align:right;top:431px;color:#000;letter-spacing:-0.02px">-4 615,38</div>
<div class="a gc num" style="left:837px;width:80px;padding-right:0.82px;text-align:right;top:431px;color:#000;letter-spacing:-0.02px">-4 615,38</div>
<div class="a gc num" style="left:917px;width:81px;text-align:center;top:431px;color:#000;letter-spacing:-0.26px">5000</div>
<div class="a gc num" style="left:997px;width:81px;text-align:center;top:431px;color:#000;letter-spacing:-0.33px">6</div>
<div class="a gc s" style="left:1080px;top:431px;color:#000;letter-spacing:0.20px">Lønn</div>
<div class="a gc s" style="left:1170px;top:431px;color:#000;letter-spacing:0.29px">kontantytelse</div>
<div class="a gc s" style="left:1278px;top:431px;color:#000;letter-spacing:0.11px">trekkILoennForFerie</div>
<div class="a gc num" style="left:1433px;top:431px;color:#000;letter-spacing:-0.33px">6</div>
<div class="a" style="left:1251px;top:420px;width:173px;height:40px;border:3px solid #ed1a1f;border-radius:21px/20px"></div>
<div class="a" style="left:181px;top:479px;width:1271px;height:15px;background:#cdcdcd"></div>
<svg class="a" style="left:168px;top:482px" width="7" height="9"><path d="M6.2 1L2.4 4.5L6.2 8" stroke="#4c4c4c" stroke-width="2.1" fill="none"/></svg>
<svg class="a" style="left:1470px;top:482px" width="7" height="9"><path d="M0.8 1L4.6 4.5L0.8 8" stroke="#4c4c4c" stroke-width="2.1" fill="none"/></svg>
<div class="a m" style="left:320px;top:500px;line-height:16px;transform:scaleX(0.850)">Sum AGA</div>
<div class="a sum" style="left:374px;width:224px"><span class="m ib" style="transform:scaleX(0.888);transform-origin:100% 50%">20 499,23</span></div>
<div class="a m" style="left:749px;top:500px;line-height:16px;transform:scaleX(0.828)">Sum Beløp</div>
<div class="a sum" style="left:808px;width:224px"><span class="m ib" style="transform:scaleX(0.877);transform-origin:100% 50%">145 384,62</span></div>
<div class="a m" style="left:1184px;top:500px;line-height:16px;transform:scaleX(0.840)">Sum Antall</div>
<div class="a sum" style="left:1242px;width:236px"><span class="m ib" style="transform:scaleX(0.887);transform-origin:100% 50%">6,00</span></div>
<div id="status" class="a"></div>
<div class="a" style="left:207px;top:531px;width:1px;height:21px;background:#8f9196"></div><div class="a" style="left:208px;top:531px;width:1px;height:21px;background:#fafafa"></div>
<div class="a s" style="left:11px;top:534px;line-height:16px;color:#1a1a1a;letter-spacing:0.14px">6 rader.</div>
<div class="a s" style="left:215px;top:534px;line-height:16px;color:#1a1a1a;letter-spacing:0.19px">Ansattnr. lik 2, Lønnsart begynner med 1</div>
<svg class="a" style="left:1475px;top:537px" width="11" height="11"><rect x="8" y="0" width="2" height="2" fill="#a9aab8"/><rect x="4" y="4" width="2" height="2" fill="#a9aab8"/><rect x="8" y="4" width="2" height="2" fill="#a9aab8"/><rect x="0" y="8" width="2" height="2" fill="#a9aab8"/><rect x="4" y="8" width="2" height="2" fill="#a9aab8"/><rect x="8" y="8" width="2" height="2" fill="#a9aab8"/></svg>
</body></html>
